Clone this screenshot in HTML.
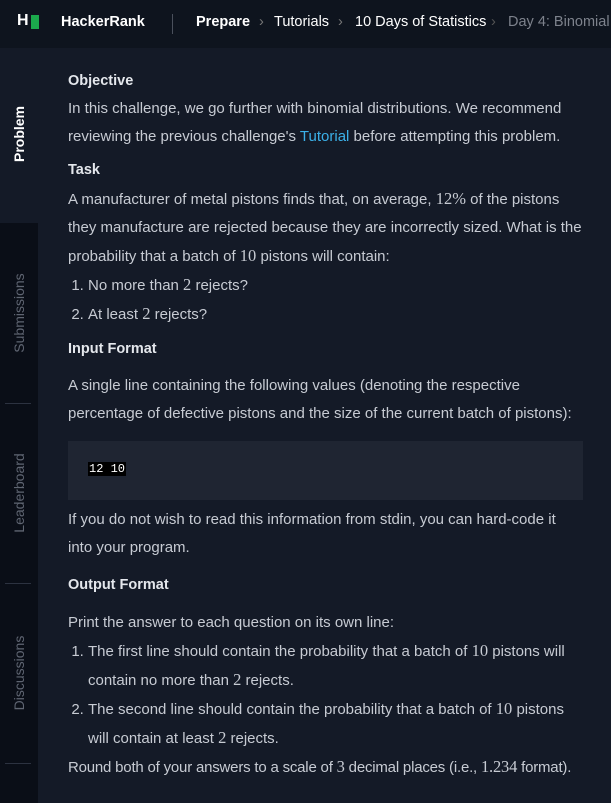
<!DOCTYPE html>
<html><head><style>
*{margin:0;padding:0;box-sizing:border-box}
body{width:611px;height:803px;overflow:hidden;background:#141a27;font-family:"Liberation Sans",sans-serif;color:#c7cbd3;font-size:15px;position:relative}
.hdr{position:absolute;left:0;top:0;width:611px;height:48px;background:#0e141e;white-space:nowrap}
.hdr span{position:absolute;top:14px;font-size:14.5px}
.side{position:absolute;left:0;top:48px;width:38px;height:755px;background:#0a0e17}
.side .act{position:absolute;left:0;top:0;width:38px;height:175px;background:#141a27}
.lbl{position:absolute;left:19px;transform:translate(-50%,-50%) rotate(-90deg);white-space:nowrap;font-size:14px;color:#5f6572}
.div{position:absolute;left:5px;width:26px;height:1px;background:#2c3240}
.c{position:absolute;left:68px;width:515px;line-height:28px}
h4{color:#e4e7ec;font-size:14.5px;font-weight:bold;position:absolute;left:68px}
li{font-size:15px}
.m{font-family:"Liberation Serif",serif;font-size:16.5px}
a{color:#3bb0e8;text-decoration:none}
ol{padding-left:20px}
.code{position:absolute;left:68px;top:441px;width:515px;height:59px;background:#1f2532}
.code span{position:absolute;left:20px;top:21px;font-family:"Liberation Mono",monospace;font-size:12px;color:#fff;background:#000;padding:0 1px}
</style></head><body>
<div class="hdr">
<span style="left:17px;top:12px;color:#fff;font-weight:bold;font-size:16px">H</span><div style="position:absolute;left:31px;top:15px;width:8px;height:14px;background:#1ba94c"></div>
<span style="left:61px;color:#fff;font-weight:bold">HackerRank</span>
<div style="position:absolute;left:172px;top:14px;width:1px;height:20px;background:#4a505c"></div>
<span style="left:196px;color:#fff;font-weight:bold">Prepare</span>
<span style="left:259px;color:#777">›</span>
<span style="left:274px;color:#fff">Tutorials</span>
<span style="left:338px;color:#777">›</span>
<span style="left:355px;color:#fff">10 Days of Statistics</span>
<span style="left:491px;color:#555">›</span>
<span style="left:508px;color:#7d828c">Day 4: Binomial</span>
</div>
<div class="side"><div class="act"></div></div>
<div class="lbl" style="top:134px;color:#fff;font-weight:bold">Problem</div>
<div class="lbl" style="top:313px">Submissions</div>
<div class="div" style="top:403px"></div>
<div class="lbl" style="top:493px">Leaderboard</div>
<div class="div" style="top:583px"></div>
<div class="lbl" style="top:673px">Discussions</div>
<div class="div" style="top:763px"></div>

<h4 style="top:73px">Objective</h4>
<div class="c" style="top:95px">In this challenge, we go further with binomial distributions. We recommend reviewing the previous challenge's <a>Tutorial</a> before attempting this problem.</div>
<h4 style="top:162px">Task</h4>
<div class="c" style="top:185px">A manufacturer of metal pistons finds that, on average, <span class="m">12%</span> of the pistons they manufacture are rejected because they are incorrectly sized. What is the probability that a batch of <span class="m">10</span> pistons will contain:
<ol><li>No more than <span class="m">2</span> rejects?</li><li>At least <span class="m">2</span> rejects?</li></ol></div>
<h4 style="top:341px">Input Format</h4>
<div class="c" style="top:372px">A single line containing the following values (denoting the respective percentage of defective pistons and the size of the current batch of pistons):</div>
<div class="code"><span>12 10</span></div>
<div class="c" style="top:506px">If you do not wish to read this information from stdin, you can hard-code it into your program.</div>
<h4 style="top:577px">Output Format</h4>
<div class="c" style="top:609px">Print the answer to each question on its own line:
<ol><li>The first line should contain the probability that a batch of <span class="m">10</span> pistons will contain no more than <span class="m">2</span> rejects.</li><li>The second line should contain the probability that a batch of <span class="m">10</span> pistons will contain at least <span class="m">2</span> rejects.</li></ol>
<div style="white-space:nowrap;letter-spacing:-0.2px">Round both of your answers to a scale of <span class="m">3</span> decimal places (i.e., <span class="m">1.234</span> format).</div></div>
</body></html>
